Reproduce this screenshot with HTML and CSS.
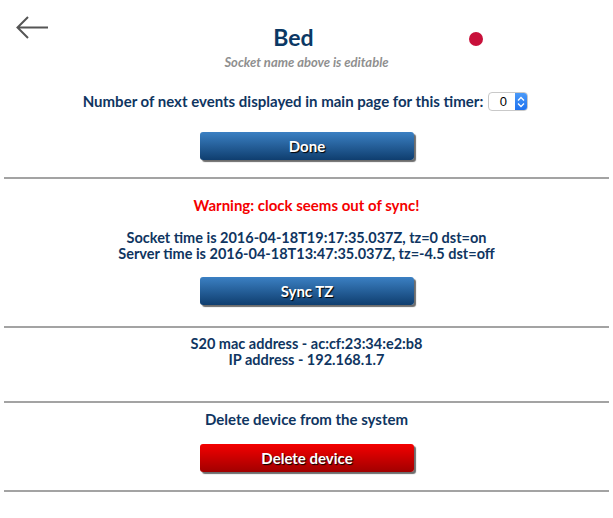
FILE: index.html
```html
<!DOCTYPE html>
<html>
<head>
<meta charset="utf-8">
<link rel="stylesheet" href="styles.css">
</head>
<body>
<div class="page">
  <section class="sec sec-top">
    <div class="header">
      <a class="back" href="#" aria-label="Back">
        <svg width="34" height="26" viewBox="0 0 34 26">
          <path d="M33 12.5H3M13 2L2.5 12.5L13 23" fill="none" stroke="#555" stroke-width="2"/>
        </svg>
      </a>
      <h1 class="title">Bed</h1>
      <span class="dot"></span>
    </div>
    <p class="hint">Socket name above is editable</p>
    <div class="events">
      <span>Number of next events displayed in main page for this timer:</span>
      <span class="select"><span class="sel-val">0</span><span class="sel-arrows">
        <svg width="8" height="12" viewBox="0 0 8 12"><path d="M1 4.5L4 1.5L7 4.5M1 7.5L4 10.5L7 7.5" fill="none" stroke="#fff" stroke-width="1.3"/></svg>
      </span></span>
    </div>
    <button class="btn btn-blue">Done</button>
  </section>
  <section class="sec sec-sync">
    <p class="warn">Warning: clock seems out of sync!</p>
    <p class="times times-sm">Socket time is 2016-04-18T19:17:35.037Z, tz=0 dst=on<br>Server time is 2016-04-18T13:47:35.037Z, tz=-4.5 dst=off</p>
    <button class="btn btn-blue">Sync TZ</button>
  </section>
  <section class="sec sec-info">
    <p class="times times-sm">S20 mac address - ac:cf:23:34:e2:b8<br>IP address - 192.168.1.7</p>
  </section>
  <section class="sec sec-del">
    <p class="times">Delete device from the system</p>
    <button class="btn btn-red">Delete device</button>
  </section>
</div>
</body>
</html>
```

FILE: styles.css
```css
* { box-sizing: border-box; }
html, body { margin: 0; padding: 0; background: #fff; }
body {
  font-family: Lato, "Open Sans", sans-serif;
  font-weight: 700;
  color: #0f3561;
  width: 613px;
}
.page { padding: 0 4px; }
.sec {
  border-bottom: 2px solid #a3a3a3;
  display: flex;
  flex-direction: column;
  align-items: center;
}
p { margin: 0; text-align: center; }

.sec-top { padding-top: 15px; padding-bottom: 17px; }
.header {
  width: 100%;
  display: grid;
  grid-template-columns: 1fr auto 1fr;
  align-items: start;
  height: 39px;
}
.back { justify-self: start; margin-left: 11px; display: block; line-height: 0; }
.title {
  margin: 0;
  font-size: 23px;
  line-height: 28px;
  padding-top: 8px;
  padding-right: 26px;
  color: #0b3864;
}
.dot {
  justify-self: start;
  margin-left: 129px;
  margin-top: 17px;
  width: 14px;
  height: 14px;
  border-radius: 50%;
  background: #c8103a;
}
.hint {
  font-size: 13px;
  font-style: italic;
  color: #8f8f8f;
  line-height: 16px;
}
.events {
  margin-top: 22px;
  font-size: 15px;
  line-height: 19px;
  display: flex;
  align-items: center;
  gap: 5px;
  margin-left: -2px;
}
.select {
  display: inline-flex;
  width: 40px;
  height: 19px;
  border: 1px solid #c9c9c9;
  border-radius: 4px;
  overflow: hidden;
  background: #fff;
}
.sel-val {
  flex: 1;
  font-family: "Liberation Sans", Arial, sans-serif;
  font-weight: 400;
  font-size: 13px;
  line-height: 17px;
  color: #000;
  text-align: center;
  padding-left: 2px;
}
.sel-arrows {
  width: 12px;
  background: linear-gradient(#4a9af8, #1f72ef);
  display: flex;
  align-items: center;
  justify-content: center;
}
.btn {
  margin-top: 21px;
  margin-left: 1px;
  width: 214px;
  height: 28px;
  border: 0;
  border-radius: 3px;
  font-family: Lato, "Open Sans", sans-serif;
  font-weight: 700;
  font-size: 15px;
  color: #fff;
  text-shadow: 1px 1px 1px #000;
  box-shadow: 2px 2px 1px #6c6c6c;
  cursor: pointer;
}
.btn-blue { background: linear-gradient(#3b80c3, #0f3e6f); }
.btn-red { background: linear-gradient(#f40000, #a10000); }

.sec-sync { padding-top: 17px; padding-bottom: 21px; }
.warn { color: #f40000; font-size: 15px; line-height: 18px; }
.times { font-size: 15px; line-height: 16px; }
.times-sm { font-size: 14.5px; }
.sec-sync .times { margin-top: 16px; }
.sec-sync .btn { margin-top: 15px; }

.sec-info { padding-top: 8px; height: 75px; }
.sec-del { padding-top: 8px; padding-bottom: 18px; }
.sec-del .btn { margin-top: 17px; }
```
